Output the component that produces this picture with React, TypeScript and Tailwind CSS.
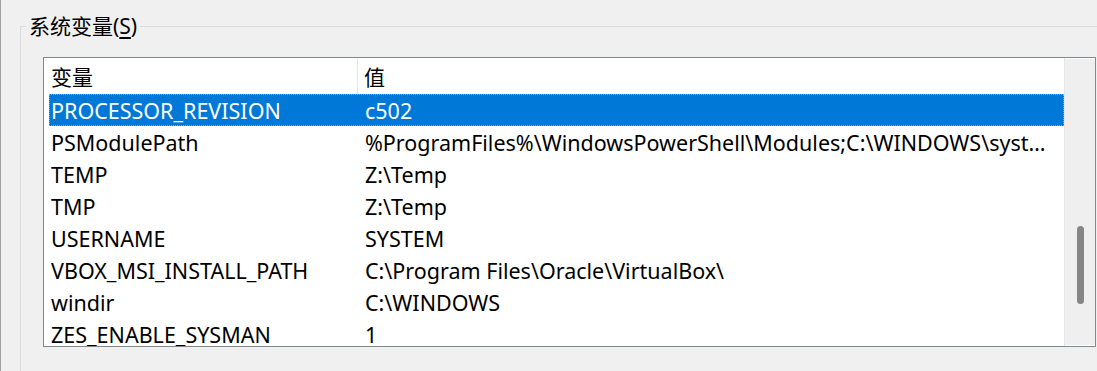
const rows: { name: string; value: string; selected?: boolean }[] = [
  { name: "PROCESSOR_REVISION", value: "c502", selected: true },
  { name: "PSModulePath", value: "%ProgramFiles%\\WindowsPowerShell\\Modules;C:\\WINDOWS\\system32\\WindowsPowerShell\\v1.0\\Modules" },
  { name: "TEMP", value: "Z:\\Temp" },
  { name: "TMP", value: "Z:\\Temp" },
  { name: "USERNAME", value: "SYSTEM" },
  { name: "VBOX_MSI_INSTALL_PATH", value: "C:\\Program Files\\Oracle\\VirtualBox\\" },
  { name: "windir", value: "C:\\WINDOWS" },
  { name: "ZES_ENABLE_SYSMAN", value: "1" },
];

const font = "[font-family:'Noto_Sans','Noto_Sans_CJK_SC',sans-serif]";

export default function App() {
  return (
    <div
      className={`relative w-[1097px] h-[371px] overflow-hidden bg-[#f0f0f0] border-l border-[#a0a0a0] text-black ${font}`}
    >
      {/* group box */}
      <div className="ml-[19px] mt-[26px] h-[400px] border-l border-t border-[#dcdcdc] pt-[30px] pl-[22px]">
        <div className="flex w-[1053px] h-[290px] border border-[#828790] bg-white">
          <div className="flex-1 flex flex-col border-r border-[#e5e5e5] overflow-hidden">
            {/* header */}
            <div className="flex h-[36px] shrink-0 text-[21px] leading-[38px]">
              <div className="w-[314px] pl-[7px] border-r border-[#e5e5e5]">变量</div>
              <div className="pl-[6px]">值</div>
            </div>
            {rows.map((r) => (
              <div
                key={r.name}
                className={`ml-[5px] flex h-[32px] shrink-0 text-[21.5px] leading-[31px] border border-dotted ${
                  r.selected ? "bg-[#0078d7] text-white border-[#f7931e]" : "border-transparent"
                }`}
              >
                <div className="w-[314px] pl-[1px] whitespace-nowrap">{r.name}</div>
                <div className="flex-1 min-w-0 pl-[1px] pr-[10px] whitespace-nowrap overflow-hidden text-ellipsis">
                  {r.value}
                </div>
              </div>
            ))}
          </div>
          {/* scrollbar */}
          <div className="w-[30px] my-[1px] bg-[#efefef] flex flex-col items-center">
            <div className="mt-[167px] w-[7px] h-[78px] rounded-full bg-[#858585]" />
          </div>
        </div>
      </div>
      {/* group title */}
      <div className="absolute left-[25px] top-[12px] px-[3px] bg-[#f0f0f0] text-[21px] leading-[28px]">
        系统变量(<span className="underline underline-offset-[3px]">S</span>)
      </div>
    </div>
  );
}
